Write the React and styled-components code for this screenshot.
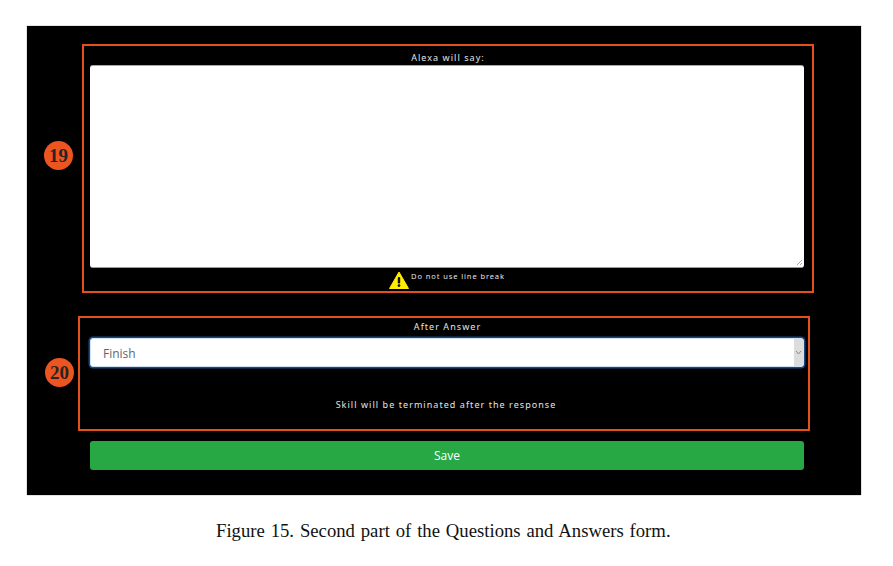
import React from 'react';
import styled, { createGlobalStyle } from 'styled-components';

const GlobalStyle = createGlobalStyle`
  html, body {
    margin: 0;
    padding: 0;
    background: #fff;
  }
`;

const Page = styled.div`
  width: 893px;
  height: 566px;
  padding: 26px 0 0 27px;
  box-sizing: border-box;
  overflow: hidden;
`;

const Panel = styled.div`
  width: 834px;
  height: 469px;
  box-sizing: border-box;
  padding-top: 18px;
  background: #000;
  box-shadow: 0 0 1px #555;
  display: flex;
  flex-direction: column;
`;

const Callout = styled.section`
  position: relative;
  width: 732px;
  height: ${p => p.$height}px;
  margin-left: ${p => p.$left}px;
  margin-bottom: ${p => p.$after}px;
  box-sizing: border-box;
  border: 2px solid #e4501a;
  display: flex;
  flex-direction: column;
  align-items: center;
`;

const Badge = styled.div`
  position: absolute;
  left: ${p => p.$left}px;
  top: ${p => p.$top}px;
  width: 29px;
  height: 29px;
  border-radius: 50%;
  background: #ec5420;
  color: #2a2320;
  font: bold 19px/29px "Liberation Serif", serif;
  text-align: center;
`;

const Label = styled.div`
  color: #e4e4e4;
  font: 9px/12px "Noto Sans", sans-serif;
  letter-spacing: 1.05px;
  white-space: nowrap;
`;

const FormLabel = styled(Label)`
  margin-top: ${p => p.$top}px;
  margin-left: ${p => p.$shift || 0}px;
`;

const TextBox = styled.div`
  position: relative;
  width: 714px;
  height: 203px;
  margin-top: 1px;
  margin-left: -2px;
  box-sizing: border-box;
  background: #fff;
  border-radius: 3px;
  border-top: 1px solid #aaa;
  border-bottom: 1px solid #999;
`;

const Resize = styled.svg`
  position: absolute;
  right: 1px;
  bottom: 1px;
`;

const Warning = styled.div`
  display: flex;
  align-items: flex-start;
  gap: 2px;
  margin-top: 3px;
  margin-left: -2px;
`;

const WarningText = styled(Label)`
  font-size: 7.5px;
  line-height: 11px;
  letter-spacing: 0.9px;
  margin-top: 0;
`;

const SelectBox = styled.div`
  width: 714px;
  height: 29px;
  margin-top: 5px;
  align-self: flex-start;
  margin-left: 10px;
  box-sizing: border-box;
  display: flex;
  background: #fff;
  border-radius: 3px;
  border: 1px solid #cfe0f3;
  box-shadow: 0 0 0 1.5px #174a85;
  overflow: hidden;
`;

const SelectValue = styled.div`
  flex: 1;
  padding-left: 12px;
  color: #5f666c;
  font: 12px/29px "Open Sans", sans-serif;
`;

const SelectArrow = styled.div`
  width: 9px;
  background: #dcdcdc;
  display: flex;
  align-items: center;
  justify-content: center;
`;

const SaveButton = styled.button`
  width: 714px;
  height: 29px;
  margin-left: 63px;
  padding: 0;
  border: 0;
  border-radius: 3px;
  background: #28a745;
  color: #fff;
  font: 12px/29px "Open Sans", sans-serif;
`;

const Caption = styled.p`
  margin: 25px 0 0 189px;
  color: #111;
  font: 18.7px/22px "Liberation Serif", serif;
  word-spacing: 1.2px;
  white-space: nowrap;
`;

export default function App() {
  return (
    <Page>
      <GlobalStyle />
      <Panel>
        <Callout $left={55} $height={249} $after={23}>
          <Badge $left={-40} $top={95}>19</Badge>
          <FormLabel $top={6}>Alexa will say:</FormLabel>
          <TextBox>
            <Resize width="7" height="7" viewBox="0 0 7 7">
              <path d="M1 6 L6 1 M4 6 L6 4" stroke="#999" strokeWidth="0.8" />
            </Resize>
          </TextBox>
          <Warning>
            <svg width="20" height="18" viewBox="0 0 20 18">
              <path d="M10 1 L19.5 17.5 H0.5 Z" fill="#ffee00" stroke="#ffee00" strokeLinejoin="round" />
              <rect x="8.8" y="6" width="2.4" height="6.5" rx="1" fill="#111" />
              <circle cx="10" cy="14.6" r="1.4" fill="#111" />
            </svg>
            <WarningText>Do not use line break</WarningText>
          </Warning>
        </Callout>
        <Callout $left={51} $height={115} $after={10}>
          <Badge $left={-35} $top={40}>20</Badge>
          <FormLabel $top={3} $shift={7}>After Answer</FormLabel>
          <SelectBox>
            <SelectValue>Finish</SelectValue>
            <SelectArrow>
              <svg width="7" height="5" viewBox="0 0 7 5">
                <path d="M1 1 L3.5 4 L6 1" fill="none" stroke="#8a8a8a" strokeWidth="1" />
              </svg>
            </SelectArrow>
          </SelectBox>
          <FormLabel $top={32} $shift={4}>Skill will be terminated after the response</FormLabel>
        </Callout>
        <SaveButton>Save</SaveButton>
      </Panel>
      <Caption>Figure 15. Second part of the Questions and Answers form.</Caption>
    </Page>
  );
}
